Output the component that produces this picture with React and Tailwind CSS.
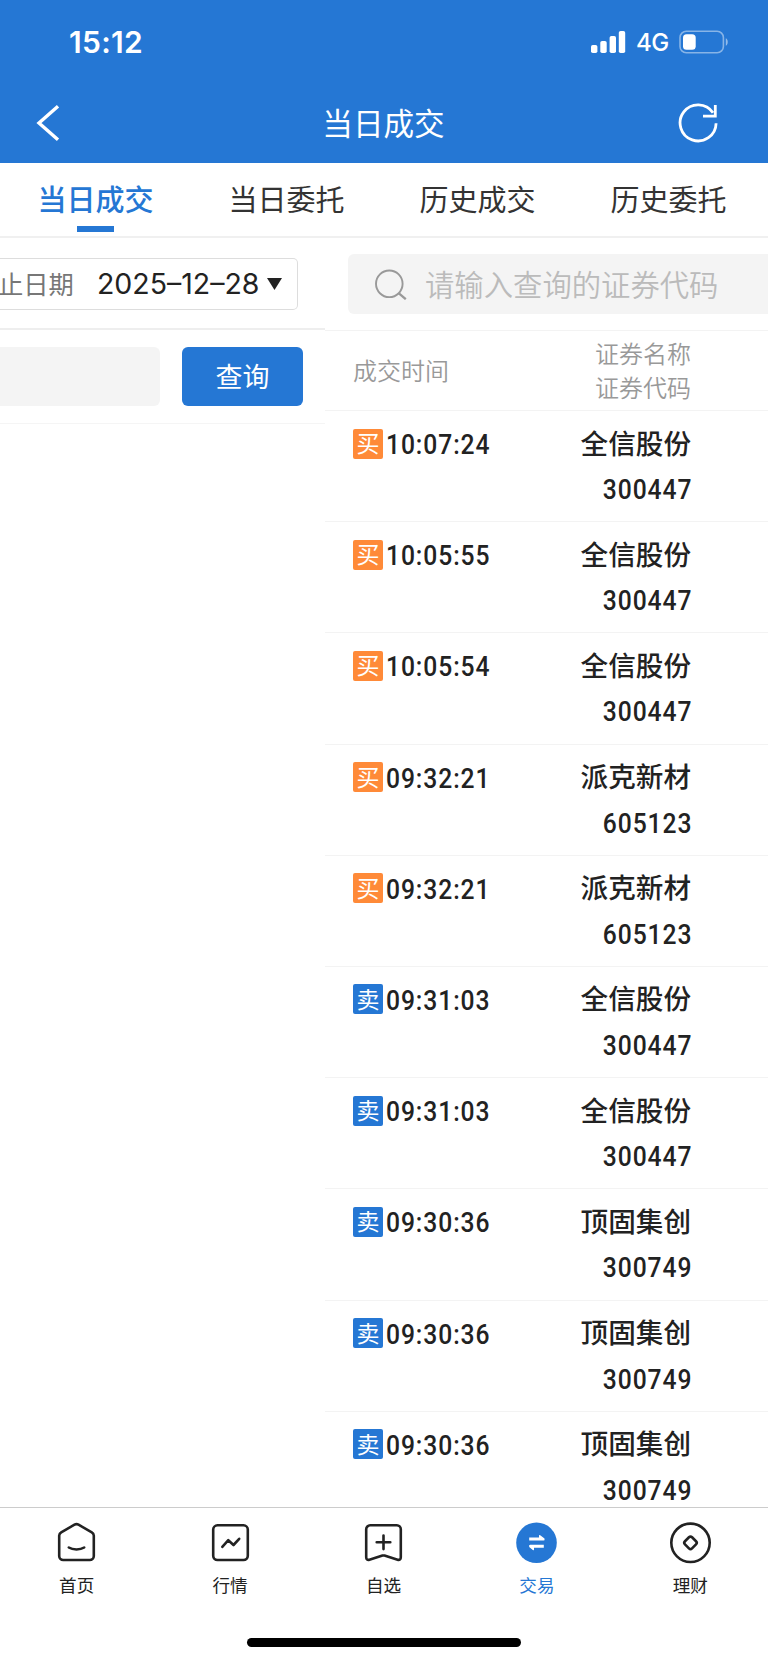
import React, { useState } from 'react';

const tabs = ['当日成交', '当日委托', '历史成交', '历史委托'];

const trades = [
  { side: '买', time: '10:07:24', name: '全信股份', code: '300447' },
  { side: '买', time: '10:05:55', name: '全信股份', code: '300447' },
  { side: '买', time: '10:05:54', name: '全信股份', code: '300447' },
  { side: '买', time: '09:32:21', name: '派克新材', code: '605123' },
  { side: '买', time: '09:32:21', name: '派克新材', code: '605123' },
  { side: '卖', time: '09:31:03', name: '全信股份', code: '300447' },
  { side: '卖', time: '09:31:03', name: '全信股份', code: '300447' },
  { side: '卖', time: '09:30:36', name: '顶固集创', code: '300749' },
  { side: '卖', time: '09:30:36', name: '顶固集创', code: '300749' },
  { side: '卖', time: '09:30:36', name: '顶固集创', code: '300749' },
];

function StatusBar() {
  return (
    <div className="flex h-[84px] items-center justify-between pl-[69px] pr-[39px] text-white">
      <span className="font-['Inter'] text-[30px] font-semibold leading-none tracking-[0.3px]">15:12</span>
      <div className="flex items-center">
        <svg width="35" height="22" viewBox="0 0 35 22" fill="#fff">
          <rect x="0" y="14" width="6.4" height="8" rx="1.8" />
          <rect x="9.3" y="10" width="6.4" height="12" rx="1.8" />
          <rect x="18.6" y="5" width="6.4" height="17" rx="1.8" />
          <rect x="27.8" y="0" width="6.4" height="22" rx="1.8" />
        </svg>
        <span className="ml-[10px] w-[33px] pt-[2px] font-['Inter'] text-[24px] font-medium leading-none tracking-[-0.6px]">4G</span>
        <svg className="ml-[10px]" width="50" height="24" viewBox="0 0 50 24" fill="none">
          <rect x="1" y="1.3" width="43.4" height="21.4" rx="6.3" stroke="#fff" strokeOpacity="0.45" strokeWidth="1.6" />
          <rect x="4" y="4.2" width="12.7" height="15.6" rx="3.6" fill="#fff" />
          <path d="M46.8 8.2c2.6 1.2 2.6 6.4 0 7.6z" fill="#fff" fillOpacity="0.5" />
        </svg>
      </div>
    </div>
  );
}

function TitleBar() {
  return (
    <div className="flex h-[77px] items-center justify-between pl-[36px] pr-[50px] text-white">
      <svg width="38" height="38" viewBox="0 0 38 38" fill="none" stroke="#fff" strokeWidth="3.4">
        <path d="M22 2.2L3 19l19 16.8" />
      </svg>
      <h1 className="ml-[15px] text-[30.6px] leading-none">当日成交</h1>
      <svg width="40" height="40" viewBox="0 0 40 40" fill="none" stroke="#fff" strokeWidth="2.8">
        <path d="M38.1 20.2A18 18 0 1 1 35 9.8" />
        <path d="M37.3 1.9v11.3H25" />
      </svg>
    </div>
  );
}

function Filters() {
  return (
    <div className="w-[325px] shrink-0">
      <div className="flex h-[92px] items-center border-b-2 border-[#eee]">
        <div className="mt-[2px] flex h-[52px] w-[298px] items-center rounded-r-[5px] border border-l-0 border-[#ddd]">
          <span className="-ml-[2px] text-[25.3px] leading-none text-[#777]">止日期</span>
          <span className="ml-[23px] w-[163px] whitespace-nowrap pt-[1px] font-['Inter'] text-[28.5px] leading-none text-[#222]">2025–12–28</span>
          <svg className="ml-[7px]" width="15" height="12" viewBox="0 0 15 12">
            <path d="M0 0h15L7.5 12z" fill="#222" />
          </svg>
        </div>
      </div>
      <div className="flex h-[94px] items-center border-b border-[#f5f5f5]">
        <div className="h-[59px] w-[160px] rounded-r-[6px] bg-[#f4f4f4]" />
        <button className="ml-[22px] h-[59px] w-[121px] rounded-[6px] bg-[#2577d4] pb-[2px] text-[27px] leading-none text-white">查询</button>
      </div>
    </div>
  );
}

function TradeRow({ trade }) {
  return (
    <div className="flex h-[111.2px] items-start justify-between border-b border-[#f3f3f3] pl-[28px] pr-[77px] text-[#222]">
      <div className="mt-[17px] flex items-center">
        <span className={`flex size-[30px] items-center justify-center rounded-[2px] pb-[2px] text-[23px] leading-none text-white ${trade.side === '买' ? 'bg-[#ff8a38]' : 'bg-[#2577d4]'}`}>
          {trade.side}
        </span>
        <span className="ml-[3px] origin-left scale-x-[0.88] pt-[3px] font-['Roboto'] text-[28px] font-medium leading-none tracking-[1.05px]">{trade.time}</span>
      </div>
      <div className="text-right">
        <p className="mt-[16.5px] text-[27.6px] font-medium leading-[28px]">{trade.name}</p>
        <p className="mt-[20.5px] -mr-[1px] origin-right scale-x-[0.88] font-['Roboto'] text-[28px] font-medium leading-[28px] tracking-[1.05px]">{trade.code}</p>
      </div>
    </div>
  );
}

function TradeList() {
  return (
    <div className="min-w-0 flex-1">
      <div className="flex h-[93px] items-center border-b border-[#f3f3f3] pl-[23px]">
        <div className="flex h-[60px] flex-1 items-center rounded-l-[6px] bg-[#f4f4f4] pl-[27px]">
          <svg width="32" height="31" viewBox="0 0 32 31" fill="none" stroke="#999" strokeWidth="1.9">
            <circle cx="14.3" cy="14.8" r="13.3" />
            <path d="M23.6 24.2l7.2 6" strokeWidth="2.3" />
          </svg>
          <span className="ml-[18px] whitespace-nowrap pb-[1px] text-[29.35px] font-[350] leading-none text-[#bbb]">请输入查询的证券代码</span>
        </div>
      </div>
      <div className="flex h-[80px] items-center justify-between border-b border-[#f3f3f3] pb-[2px] pl-[28px] pr-[77px] text-[24px] font-[350] text-[#999]">
        <span>成交时间</span>
        <div className="text-right leading-[34px]">
          <p>证券名称</p>
          <p>证券代码</p>
        </div>
      </div>
      {trades.map((trade, i) => (
        <TradeRow key={i} trade={trade} />
      ))}
    </div>
  );
}

const navItems = [
  {
    label: '首页',
    icon: (
      <>
        <path d="M3.2 13.5a4 4 0 0 1 2-3.2L18.5 2.7a4 4 0 0 1 4 0l13.3 7.6a4 4 0 0 1 2 3.2V34a4 4 0 0 1-4 4H7.2a4 4 0 0 1-4-4z" />
        <path d="M12.8 25.5c4 2.6 11.4 2.6 15.4 0" />
      </>
    ),
  },
  {
    label: '行情',
    icon: (
      <>
        <rect x="3.2" y="3.3" width="34.6" height="34.7" rx="4.3" />
        <path d="M12.3 24.8l6-6.6 5.2 4.8 5.7-6.2" />
      </>
    ),
  },
  {
    label: '自选',
    icon: (
      <>
        <path d="M7.2 3.3h26.6a4 4 0 0 1 4 4v28c0 2-1.3 3-3.2 2.4L21.5 33.6a4 4 0 0 0-2 0L6.4 37.7c-1.9.6-3.2-.4-3.2-2.4v-28a4 4 0 0 1 4-4z" />
        <path d="M20.5 13.5v13.6M13.7 20.3h13.6" />
      </>
    ),
  },
  {
    label: '交易',
    active: true,
    icon: (
      <>
        <circle cx="20.5" cy="20.8" r="20.3" fill="#2577d4" stroke="none" />
        <path d="M13.2 15.5h9.8v-1.8q0-1.2 1.2-.5l4.3 3.2q.6 2.2-1 2.2H13.2zM27.8 25.8H18v1.8q0 1.2-1.2.5l-3.6-3.2q-.6-2.2 1-2.2h13.6z" fill="#fff" stroke="none" />
      </>
    ),
  },
  {
    label: '理财',
    icon: (
      <>
        <circle cx="20.5" cy="20.8" r="19.2" />
        <rect x="15.5" y="15.8" width="10" height="10" rx="2.2" transform="rotate(45 20.5 20.8)" />
      </>
    ),
  },
];

function BottomNav() {
  return (
    <nav className="flex h-[156px] shrink-0 flex-col items-center border-t border-[#ccc] bg-white">
      <div className="grid w-full grid-cols-5 pr-px pt-[14px]">
        {navItems.map((item) => (
          <div key={item.label} className={`flex flex-col items-center ${item.active ? 'text-[#2577d4]' : 'text-[#222]'}`}>
            <svg width="41" height="42" viewBox="0 0 41 42" fill="none" stroke="currentColor" strokeWidth="2.6" strokeLinecap="round" strokeLinejoin="round">
              {item.icon}
            </svg>
            <span className="mt-[11px] text-[17.6px] leading-[20px]">{item.label}</span>
          </div>
        ))}
      </div>
      <div className="mt-[43px] h-[9px] w-[274px] rounded-full bg-black" />
    </nav>
  );
}

export default function App() {
  const [activeTab, setActiveTab] = useState(0);

  return (
    <div className="flex h-[1663px] w-[768px] flex-col overflow-hidden bg-white font-['Noto_Sans_CJK_SC',sans-serif]">
      <header className="h-[163px] shrink-0 bg-[#2577d4]">
        <StatusBar />
        <TitleBar />
      </header>
      <div className="grid h-[75px] shrink-0 grid-cols-4 border-b-2 border-[#f0f0f0] pr-[4px]">
        {tabs.map((tab, i) => (
          <button key={tab} onClick={() => setActiveTab(i)} className="flex flex-col items-center pt-[21px]">
            <span className={i === activeTab ? 'text-[29px] font-medium leading-[29px] text-[#2577d4]' : 'text-[29px] leading-[29px] text-[#333]'}>{tab}</span>
            {i === activeTab && <span className="mt-[13px] h-[6px] w-[37px] bg-[#2577d4]" />}
          </button>
        ))}
      </div>
      <main className="flex min-h-0 flex-1 items-start overflow-hidden">
        <Filters />
        <TradeList />
      </main>
      <BottomNav />
    </div>
  );
}
